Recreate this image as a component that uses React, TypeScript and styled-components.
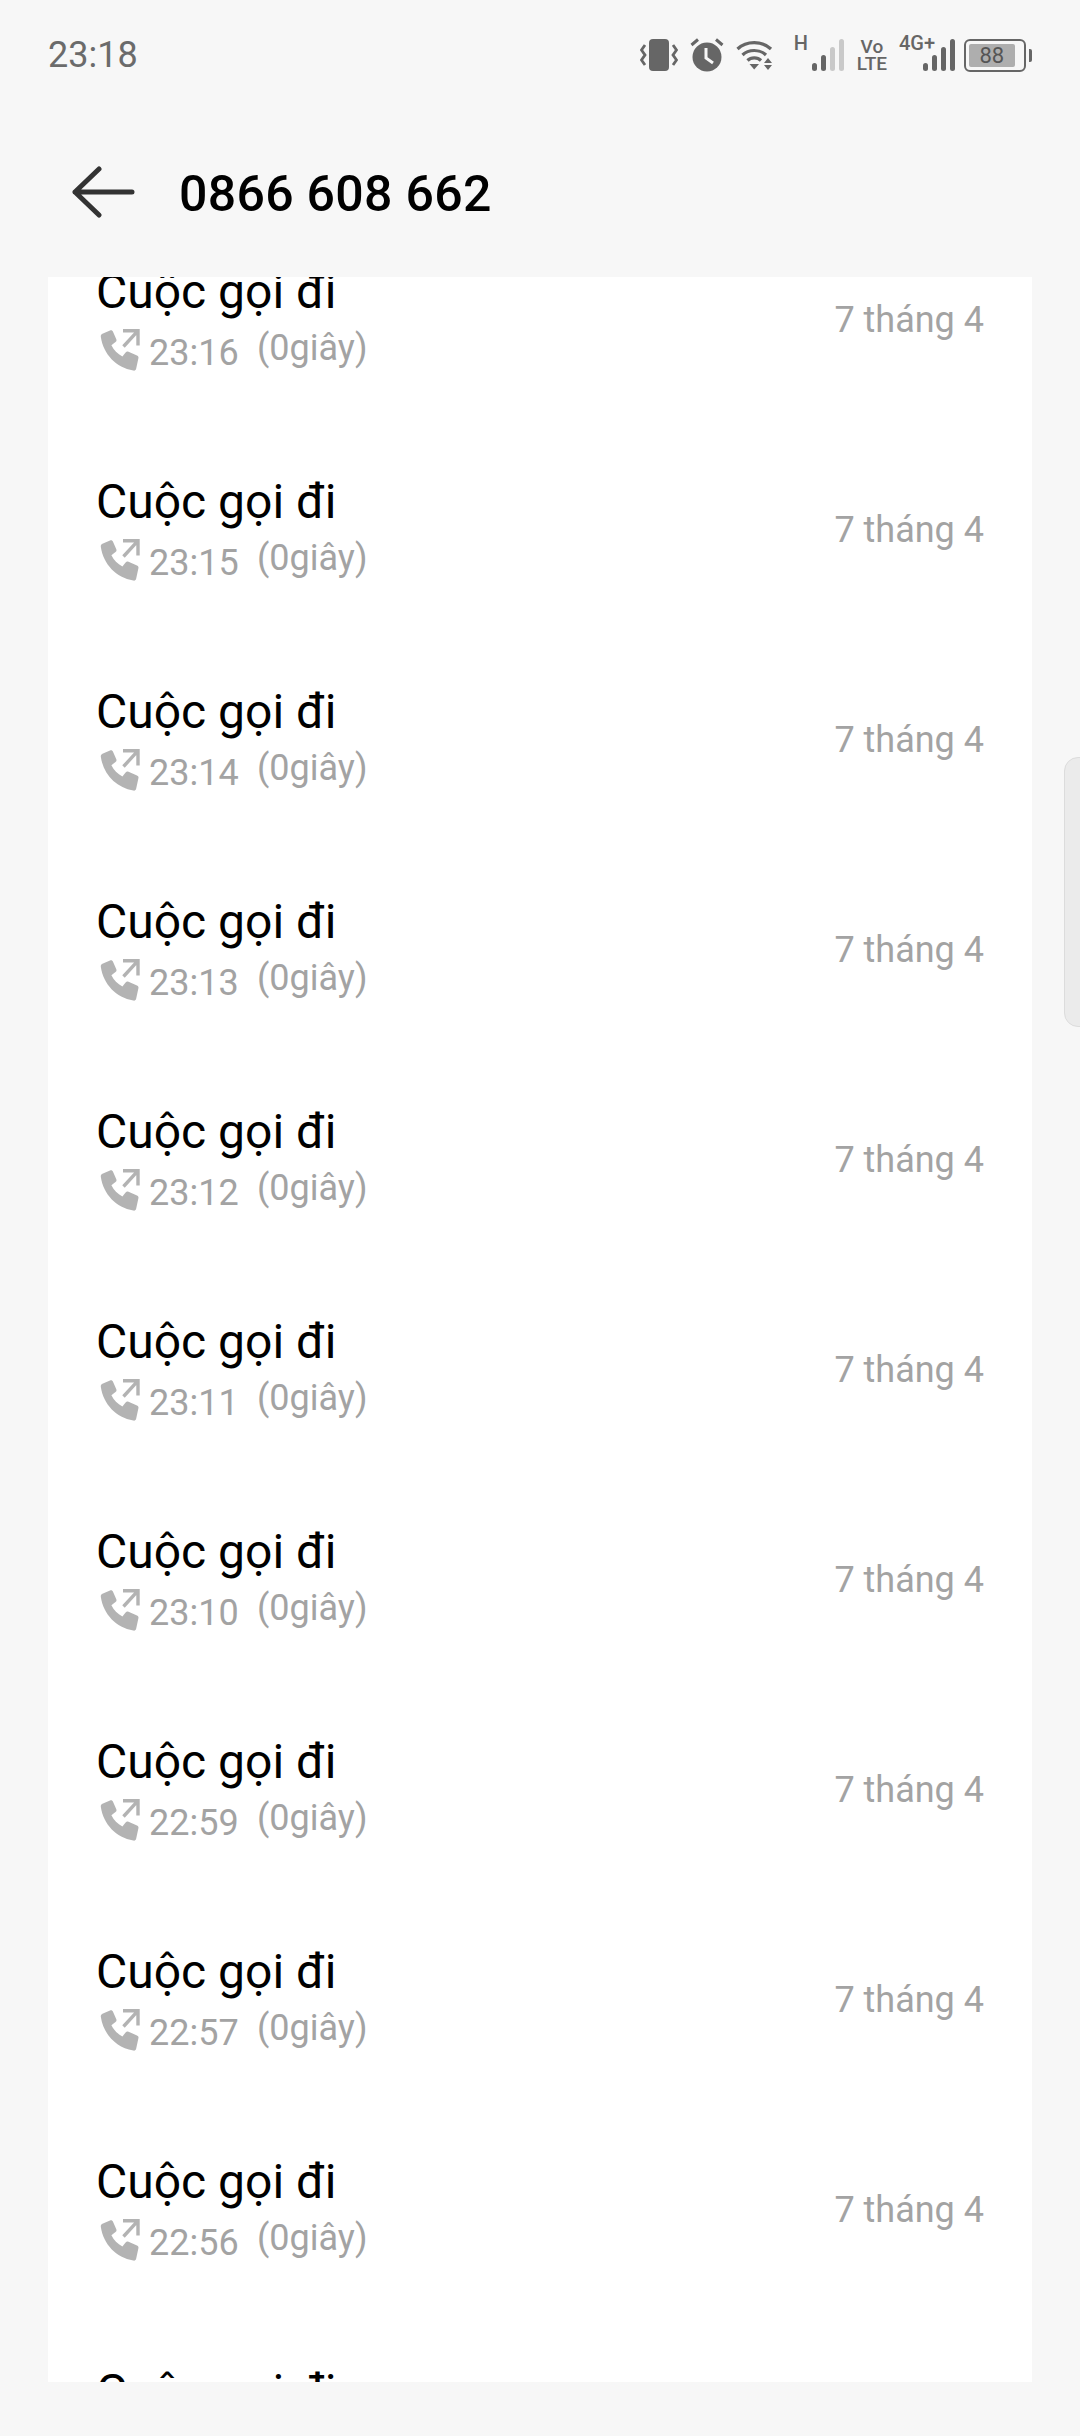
import * as React from 'react';
import styled, { createGlobalStyle } from 'styled-components';

const GlobalStyle = createGlobalStyle`
    html, body {
        margin: 0;
        padding: 0;
        background: #f7f7f7;
    }
    body {
        font-family: Roboto, "Liberation Sans", sans-serif;
    }
`

const Screen = styled.div`
    position: relative;
    width: 1080px;
    height: 2436px;
    overflow: hidden;
    background: #f7f7f7;
    display: flex;
    flex-direction: column;
`

const StatusBar = styled.div`
    height: 110px;
    padding: 0 48px 0 48px;
    display: flex;
    align-items: center;
    justify-content: space-between;
    color: #666;
    flex-shrink: 0;
`

const Clock = styled.span`
    font-size: 36px;
    color: #6b6b6b;
`

const StatusIcons = styled.div`
    display: flex;
    align-items: center;
`

const StatusIcon = styled.svg<{ $gap?: number }>`
    display: block;
    margin-left: ${props => props.$gap ?? 0}px;
    fill: #666;
`

const SignalGroup = styled.div<{ $gap: number }>`
    position: relative;
    margin-left: ${props => props.$gap}px;
    height: 34px;
    display: flex;
    align-items: flex-end;
`

const SignalLabel = styled.span`
    position: absolute;
    top: -6px;
    left: 0;
    font-size: 20px;
    line-height: 22px;
    font-weight: 500;
    color: #666;
`

const VoLte = styled.div`
    margin-left: 12px;
    display: flex;
    flex-direction: column;
    align-items: center;
    font-size: 19px;
    line-height: 17px;
    font-weight: 500;
    color: #666;
`

const Battery = styled.div`
    margin-left: 8px;
    width: 62px;
    height: 33px;
    box-sizing: border-box;
    border: 2px solid #666;
    border-radius: 6px;
    padding: 3px;
    display: flex;
`

const BatteryFill = styled.div`
    width: 88%;
    background: #aeaeae;
    border-radius: 2px;
    font-size: 22px;
    line-height: 23px;
    text-align: center;
    color: #555;
`

const BatteryCap = styled.div`
    margin-left: 3px;
    width: 3px;
    height: 13px;
    border-radius: 0 2px 2px 0;
    background: #666;
`

const TopBar = styled.div`
    height: 167px;
    flex-shrink: 0;
    display: flex;
    align-items: flex-start;
    padding: 0 0 0 72px;
`

const BackArrow = styled.svg`
    display: block;
    margin-top: 56px;
    fill: none;
    stroke: #333;
    stroke-width: 5;
    stroke-linecap: round;
    stroke-linejoin: round;
`

const Heading = styled.h1`
    margin: 52px 0 0 43px;
    font-size: 50px;
    line-height: 64px;
    font-weight: 500;
    color: #000;
    letter-spacing: 0.3px;
`

const Card = styled.div`
    margin: 0 48px;
    height: 2105px;
    background: #fff;
    overflow: hidden;
`

const CallList = styled.div`
    margin-top: -62px;
`

const CallRow = styled.div`
    height: 210px;
    box-sizing: border-box;
    padding: 0 48px;
    display: flex;
    align-items: center;
    justify-content: space-between;
`

const CallInfo = styled.div`
    display: flex;
    flex-direction: column;
`

const CallTitle = styled.div`
    font-size: 48px;
    line-height: 54px;
    color: #000;
`

const CallDetail = styled.div`
    margin-top: 7px;
    display: flex;
    align-items: flex-start;
    color: #a3a3a3;
    font-size: 36px;
    line-height: 44px;
`

const CallTime = styled.span`
    margin: 5px 0 0 9px;
    width: 108px;
`

const CallDuration = styled.span``

const CallDate = styled.div`
    font-size: 36px;
    line-height: 44px;
    color: #a3a3a3;
`

const PhoneIcon = styled.svg`
    display: block;
    margin: 3px 0 0 4px;
    flex-shrink: 0;
`

const SideHandle = styled.div`
    position: absolute;
    left: 1064px;
    top: 757px;
    width: 30px;
    height: 270px;
    box-sizing: border-box;
    background: #ebebeb;
    border: 1px solid #dcdcdc;
    border-radius: 14px;
`

const CALLS = ['23:16', '23:15', '23:14', '23:13', '23:12', '23:11', '23:10', '22:59', '22:57', '22:56', '22:55'];

function OutgoingCallIcon() {
    return (
        <PhoneIcon width="40" height="42" viewBox="0 0 40 42">
            <path
                fill="#b3b3b3"
                d="M3 4.5 L10 1.6 C11.4 1 12.4 1.6 13 2.8 L16.3 10.2 C16.8 11.4 16.4 12.4 15.5 13.1 L11.4 16.2 C13.8 21 17.6 24.9 22.4 27.4 L25.6 23.4 C26.4 22.5 27.4 22.1 28.5 22.7 L37 26.4 C38.3 27 38.8 28 38.4 29.3 L36.2 39.6 C35.9 41.2 34.8 41.9 33.3 41.6 C16.2 38.6 3.4 25.4 0.8 7.8 C0.6 6.2 1.4 5.2 3 4.5 Z"
            />
            <path
                fill="none"
                stroke="#b3b3b3"
                strokeWidth="3.4"
                d="M23 1.8 H38 V16.5 M37.4 2.4 L23.5 17.5"
            />
        </PhoneIcon>
    );
}

function SignalBars({ active }: { active: number }) {
    const heights = [8, 16, 24, 32];
    return (
        <svg width="34" height="34" viewBox="0 0 34 34">
            {heights.map((h, i) => (
                <rect
                    key={i}
                    x={1 + i * 9}
                    y={33 - h}
                    width="5"
                    height={h}
                    rx="2.5"
                    fill={i < active ? '#666' : '#c9c9c9'}
                />
            ))}
        </svg>
    );
}

export default function App() {
    return (
        <Screen>
            <GlobalStyle />
            <StatusBar>
                <Clock>23:18</Clock>
                <StatusIcons>
                    {/* rung */}
                    <StatusIcon width="38" height="32" viewBox="0 0 38 32">
                        <rect x="9" y="0" width="20" height="32" rx="4" />
                        <path
                            d="M5 6 L1.5 11 L5 16 L1.5 21 L5 26 M33 6 L36.5 11 L33 16 L36.5 21 L33 26"
                            fill="none"
                            stroke="#666"
                            strokeWidth="2.8"
                        />
                    </StatusIcon>
                    {/* bao thuc */}
                    <StatusIcon $gap={12} width="34" height="34" viewBox="0 0 34 34">
                        <circle cx="17" cy="19" r="14.5" />
                        <path d="M16 10 V20 L23 25" fill="none" stroke="#f7f7f7" strokeWidth="3" />
                        <path d="M1.5 7 L8 1.5 M32.5 7 L26 1.5" fill="none" stroke="#666" strokeWidth="3" />
                    </StatusIcon>
                    {/* wifi */}
                    <StatusIcon $gap={12} width="38" height="32" viewBox="0 0 38 32">
                        <path
                            d="M1.5 10 C10.5 1.5 26 1.5 35 10 M6.5 16 C12.5 10 24 10 30 16 M11.5 21.5 C15 18 21.5 18 25 21.5"
                            fill="none"
                            stroke="#666"
                            strokeWidth="3.2"
                        />
                        <path d="M13.5 25 H23 L18.2 30.5 Z" />
                        <path d="M28 24 L32 19 L36 24 Z M28 26 H36 L32 31 Z" />
                    </StatusIcon>
                    <SignalGroup $gap={20}>
                        <SignalLabel>H</SignalLabel>
                        <svg width="17" height="1" />
                        <SignalBars active={2} />
                    </SignalGroup>
                    <VoLte>
                        <span>Vo</span>
                        <span>LTE</span>
                    </VoLte>
                    <SignalGroup $gap={12}>
                        <SignalLabel>4G+</SignalLabel>
                        <svg width="23" height="1" />
                        <SignalBars active={4} />
                    </SignalGroup>
                    <Battery>
                        <BatteryFill>88</BatteryFill>
                    </Battery>
                    <BatteryCap />
                </StatusIcons>
            </StatusBar>
            <TopBar>
                <BackArrow width="64" height="54" viewBox="0 0 64 54">
                    <path d="M3 26 H60 M27 3 L3 26 L27 49" />
                </BackArrow>
                <Heading>0866 608 662</Heading>
            </TopBar>
            <Card>
                <CallList>
                    {CALLS.map(time => (
                        <CallRow key={time}>
                            <CallInfo>
                                <CallTitle>Cuộc gọi đi</CallTitle>
                                <CallDetail>
                                    <OutgoingCallIcon />
                                    <CallTime>{time}</CallTime>
                                    <CallDuration>(0giây)</CallDuration>
                                </CallDetail>
                            </CallInfo>
                            <CallDate>7 tháng 4</CallDate>
                        </CallRow>
                    ))}
                </CallList>
            </Card>
            <SideHandle />
        </Screen>
    );
}
